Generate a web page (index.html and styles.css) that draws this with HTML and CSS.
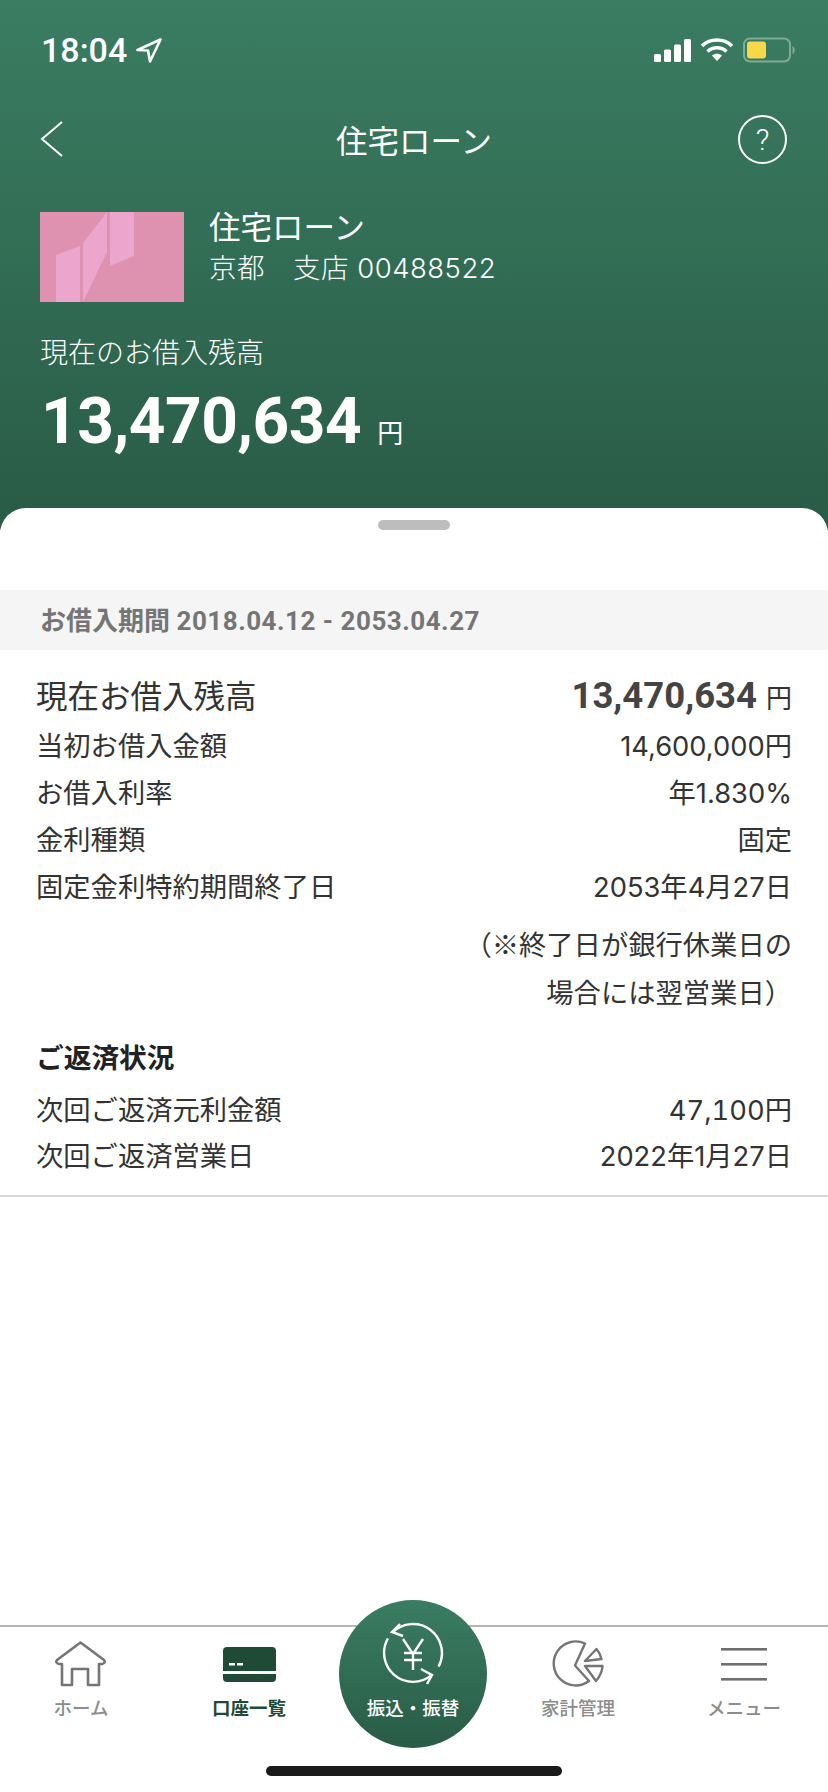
FILE: index.html
```html
<!DOCTYPE html>
<html lang="ja">
<head>
  <meta charset="UTF-8">
  <title>住宅ローン</title>
  <link rel="stylesheet" href="styles.css">
</head>
<body>
  <div class="app">
    <header class="hero">
      <div class="status">
        <div class="status-time">
          <span>18:04</span>
          <svg width="26" height="25" viewBox="0 0 26 25"><path d="M24.500 1.500 L1.500 12 L12 12.500 L14 23.500 Z" fill="none" stroke="#fff" stroke-width="2.6" stroke-linejoin="round"/></svg>
        </div>
        <div class="status-icons">
          <svg width="37" height="23" viewBox="0 0 37 23"><g fill="#fff"><rect x="0" y="15" width="7" height="8" rx="1.500"/><rect x="10" y="10.500" width="7" height="12.500" rx="1.500"/><rect x="20" y="5.500" width="7" height="17.500" rx="1.500"/><rect x="30" y="0" width="7" height="23" rx="1.500"/></g></svg>
          <svg width="32" height="24" viewBox="0 0 32 24"><g fill="none" stroke="#fff" stroke-width="3.6"><path d="M1 8 C9 0 23 0 31 8"/><path d="M6.500 13.500 C12 8.500 20 8.500 25.500 13.500"/></g><path d="M11 17.500 C14 15 18 15 21 17.500 L16 23 Z" fill="#fff"/></svg>
          <svg width="53" height="26" viewBox="0 0 53 26"><rect x="1" y="1.500" width="46" height="23" rx="6" fill="none" stroke="#7eab98" stroke-width="2"/><rect x="4" y="4.500" width="19" height="17" rx="3" fill="#f8d74a"/><path d="M49.500 9 C52.500 10 52.500 16 49.500 17 Z" fill="#7eab98"/></svg>
        </div>
      </div>
      <div class="nav">
        <svg class="nav-back" width="24" height="38" viewBox="0 0 24 38"><path d="M22 2 L2 19 L22 36" fill="none" stroke="#fff" stroke-width="2"/></svg>
        <div class="nav-title">住宅ローン</div>
        <div class="nav-help">?</div>
      </div>
      <div class="account">
        <svg class="account-card" width="144" height="90" viewBox="0 0 144 90">
          <rect width="144" height="90" fill="#de92b0"/>
          <g fill="#eca5cc">
            <path d="M16 43 L40 34 V90 H16 Z"/>
            <path d="M43 31 L67 0 V40 L43 90 Z"/>
            <path d="M70 0 H94 V44 L70 54 Z"/>
          </g>
        </svg>
        <div class="account-info">
          <div class="account-name">住宅ローン</div>
          <div class="account-branch">京都　支店 00488522</div>
        </div>
      </div>
      <div class="balance-label">現在のお借入残高</div>
      <div class="balance"><span class="balance-num">13,470,634</span><span class="balance-yen">円</span></div>
    </header>

    <main class="sheet">
      <div class="handle"></div>
      <div class="period">お借入期間 <span class="period-dates">2018.04.12 - 2053.04.27</span></div>
      <section class="details">
        <div class="row row-main"><span>現在お借入残高</span><span><b class="main-num">13,470,634</b><span class="main-yen">円</span></span></div>
        <div class="row"><span>当初お借入金額</span><span>14,600,000円</span></div>
        <div class="row"><span>お借入利率</span><span>年1.830%</span></div>
        <div class="row"><span>金利種類</span><span>固定</span></div>
        <div class="row"><span>固定金利特約期間終了日</span><span>2053年4月27日</span></div>
        <div class="note">（※終了日が銀行休業日の<br>場合には翌営業日）</div>
        <h2 class="sub-title">ご返済状況</h2>
        <div class="row"><span>次回ご返済元利金額</span><span class="tab-num">47,100円</span></div>
        <div class="row"><span>次回ご返済営業日</span><span>2022年1月27日</span></div>
      </section>
    </main>

    <nav class="tabs">
      <div class="tab">
        <div class="tab-icon">
          <svg width="52" height="46" viewBox="0 0 52 46"><path d="M25.500 1.500 L49 19 Q51 22 47 23 H44 V44 H33 V28 H17 V44 H7 V23 H4 Q0 22 2 19 Z" fill="none" stroke="#757575" stroke-width="2.6" stroke-linejoin="round"/></svg>
        </div>
        <span>ホーム</span>
      </div>
      <div class="tab tab-active">
        <div class="tab-icon">
          <svg width="53" height="35" viewBox="0 0 53 35"><rect width="53" height="35" rx="4" fill="#1f4a36"/><rect y="24" width="53" height="3" fill="#fff"/><rect x="6" y="16" width="6" height="2.500" fill="#fff"/><rect x="14" y="16" width="6" height="2.500" fill="#fff"/></svg>
        </div>
        <span>口座一覧</span>
      </div>
      <div></div>
      <div class="tab">
        <div class="tab-icon">
          <svg width="52" height="48" viewBox="-1 -1 52 48"><g fill="none" stroke="#757575" stroke-width="2.400" stroke-linejoin="round"><path d="M32 2.500 A22 22 0 1 0 36 40 L22 24.500 Z"/><path d="M43.500 8 Q47 12 48.500 18 L32 20 Z"/><path d="M32 25 H49.500 Q49 33 43 40 Z"/></g></svg>
        </div>
        <span>家計管理</span>
      </div>
      <div class="tab">
        <div class="tab-icon">
          <svg width="46" height="33" viewBox="0 0 46 33"><g fill="#6f6f6f"><rect y="0" width="46" height="2.600"/><rect y="15" width="46" height="2.600"/><rect y="30" width="46" height="2.600"/></g></svg>
        </div>
        <span>メニュー</span>
      </div>
      <div class="transfer">
        <svg width="62" height="64" viewBox="0 0 62 64">
          <g fill="none" stroke="#fff" stroke-width="2.400">
            <path d="M10.500 10.500 A29 29 0 0 1 56.600 44.600"/>
            <path d="M5.900 16.500 A29 29 0 0 0 49.600 53.200"/>
            <path d="M18 2 L10 10 L21 14"/>
            <path d="M39 47 L50 53 L45 62"/>
            <path d="M21 17 L31 32 L41 17 M31 32 V48 M22 31 H40 M22 38 H40"/>
          </g>
        </svg>
        <span>振込・振替</span>
      </div>
    </nav>
    <div class="home-bar"></div>
  </div>
</body>
</html>
```

FILE: styles.css
```css
* {
  box-sizing: border-box;
  margin: 0;
  padding: 0;
}
body {
  font-family: Roboto, "Noto Sans CJK JP", sans-serif;
  background: #fff;
  color: #333;
}
.app {
  position: relative;
  display: flex;
  flex-direction: column;
  width: 828px;
  height: 1792px;
  overflow: hidden;
  background: linear-gradient(#3a7d62, #295b46 530px, #fff 530px);
}
.hero {
  height: 508px;
  padding: 0 40px;
  color: #fff;
}
.status {
  display: flex;
  justify-content: space-between;
  align-items: center;
  height: 50px;
  margin-top: 25px;
}
.status-time {
  display: flex;
  align-items: center;
  gap: 9px;
  margin-left: 1px;
  font-size: 34px;
  font-weight: 500;
}
.status-icons {
  display: flex;
  align-items: center;
  gap: 10px;
  margin-right: -8px;
}
.nav {
  display: grid;
  grid-template-columns: 1fr auto 1fr;
  align-items: center;
  height: 50px;
  margin-top: 39px;
}
.nav-title {
  font-size: 31.5px;
}
.nav-help {
  display: flex;
  justify-content: center;
  align-items: center;
  justify-self: end;
  width: 49px;
  height: 49px;
  margin-right: 1px;
  border: 2px solid #fff;
  border-radius: 50%;
  font-size: 30px;
  font-weight: 300;
}
.account {
  display: flex;
  gap: 25px;
  margin-top: 48px;
}
.account-name {
  font-size: 31.5px;
  line-height: 34px;
}
.account-branch {
  margin-top: 2px;
  font-family: Inter, "Noto Sans CJK JP", sans-serif;
  font-size: 27.5px;
  line-height: 40px;
  font-weight: 300;
  letter-spacing: 0.5px;
}
.balance-label {
  margin-top: 32px;
  font-size: 28px;
  line-height: 40px;
  font-weight: 300;
}
.balance {
  display: flex;
  align-items: baseline;
  gap: 16px;
  margin-top: 12px;
  margin-left: 1px;
}
.balance-num {
  font-size: 64px;
  line-height: 72px;
  font-weight: 700;
  letter-spacing: -0.5px;
}
.balance-yen {
  font-size: 26px;
}
.sheet {
  flex: 1;
  background: #fff;
  border-radius: 26px 26px 0 0;
}
.handle {
  width: 72px;
  height: 10px;
  margin: 12px auto 0;
  border-radius: 5px;
  background: #bdbdbd;
}
.period {
  height: 60px;
  margin-top: 60px;
  padding-left: 40px;
  background: #f5f5f5;
  color: #757575;
  font-size: 26px;
  line-height: 62px;
  font-weight: 700;
}
.period-dates {
  letter-spacing: 0.5px;
}
.details {
  height: 547px;
  padding: 22px 36px 0;
  border-bottom: 2px solid #d9d9d9;
  font-family: Inter, "Noto Sans CJK JP", sans-serif;
  font-size: 27.3px;
}
.row {
  display: flex;
  justify-content: space-between;
  align-items: baseline;
  line-height: 47px;
}
.row-main {
  font-size: 31.5px;
  line-height: 48px;
}
.main-num {
  font-family: Roboto, sans-serif;
  font-size: 36.5px;
  color: #444;
}
.main-yen {
  margin-left: 9px;
  font-size: 26px;
}
.tab-num {
  font-variant-numeric: tabular-nums;
}
.note {
  margin-top: 8px;
  font-family: "Noto Sans CJK JP", sans-serif;
  text-align: right;
  line-height: 48px;
}
.sub-title {
  margin-top: 20px;
  margin-bottom: 7px;
  font-size: 27.7px;
  line-height: 46px;
  font-weight: 700;
  color: #222;
}
.sub-title ~ .row {
  line-height: 46px;
}
.tabs {
  display: grid;
  grid-template-columns: 162px 174px 156px 172px 160px;
  height: 167px;
  padding-top: 14px;
  border-top: 2px solid #b5b5b5;
  background: #fff;
}
.tab {
  display: flex;
  flex-direction: column;
  align-items: center;
  gap: 10px;
  color: #8c8c8c;
  font-size: 18.5px;
  line-height: 24px;
  font-weight: 500;
}
.tab-icon {
  display: flex;
  align-items: center;
  height: 46px;
}
.tab-active {
  color: #1f4a36;
  font-weight: 700;
}
.transfer {
  position: absolute;
  left: 339px;
  top: 1600px;
  display: flex;
  flex-direction: column;
  align-items: center;
  width: 148px;
  height: 148px;
  padding-top: 22px;
  gap: 11px;
  border-radius: 50%;
  background: linear-gradient(#3a7d62, #295b46);
  color: #fff;
  font-size: 18.5px;
  line-height: 24px;
  font-weight: 500;
}
.home-bar {
  position: absolute;
  left: 266px;
  top: 1766px;
  width: 296px;
  height: 10px;
  border-radius: 5px;
  background: #1a1a1a;
}
```
